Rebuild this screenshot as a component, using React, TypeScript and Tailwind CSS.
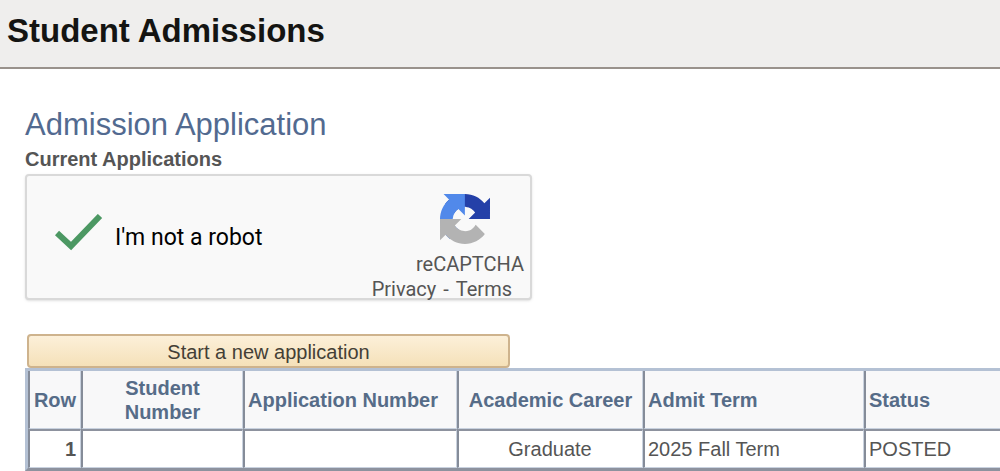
type Application = {
  studentNumber: string;
  applicationNumber: string;
  career: string;
  term: string;
  status: string;
};

const applications: Application[] = [
  {
    studentNumber: "",
    applicationNumber: "",
    career: "Graduate",
    term: "2025 Fall Term",
    status: "POSTED",
  },
];

const borderClass =
  "border-r border-b border-l-2 border-t-[#8d929e] border-r-[#c9d2df] border-b-[#c9d2df] border-l-[#858c99] last:border-r-0";
const headClass = `${borderClass} bg-[#f8f8f9] px-[3px] font-bold text-[#566c88]`;
const cellClass = `${borderClass} border-t-2 pr-1 pl-[3px]`;

function RecaptchaLogo() {
  return (
    <svg viewBox="0 0 64 64" className="size-[50px]" aria-hidden="true">
      <path
        fill="#2440a8"
        d="M64 31.955l-.033-1.37V4.687l-7.16 7.16C50.948 4.674 42.033.093 32.05.093c-10.389 0-19.622 4.96-25.458 12.64l11.736 11.86a15.55 15.55 0 0 1 4.754-5.334c2.05-1.6 4.952-2.906 8.968-2.906.485 0 .86.057 1.135.163 4.976.393 9.288 3.14 11.828 7.124l-8.307 8.307L64 31.953"
      />
      <path
        fill="#5189ea"
        d="M31.862.094l-1.37.033H4.594l7.16 7.16C4.58 13.147 0 22.06 0 32.046c0 10.388 4.96 19.622 12.64 25.458L24.5 45.768a15.55 15.55 0 0 1-5.334-4.754c-1.6-2.05-2.906-4.952-2.906-8.968 0-.485.057-.86.163-1.135.393-4.976 3.14-9.288 7.124-11.828l8.307 8.307L31.86.095"
      />
      <path
        fill="#b3b3b3"
        d="M.001 32.045l.033 1.37v25.898l7.16-7.16c5.86 7.173 14.774 11.754 24.76 11.754 10.388 0 19.622-4.96 25.458-12.64l-11.736-11.86a15.55 15.55 0 0 1-4.754 5.334c-2.05 1.6-4.952 2.906-8.968 2.906-.485 0-.86-.057-1.135-.163-4.976-.393-9.288-3.14-11.828-7.124l8.307-8.307c-10.522.04-22.4.066-27.295-.005"
      />
    </svg>
  );
}

function Recaptcha() {
  return (
    <div className="flex max-w-[507px] items-start justify-between rounded-sm border-2 border-[#d9d9d9] bg-[#f9f9f9] font-[Roboto,sans-serif] shadow-sm">
      <label className="relative flex items-center gap-3 self-center pt-0.5 pl-7 text-[23px] text-black">
        <input type="checkbox" defaultChecked className="peer sr-only" />
        <svg
          viewBox="0 0 48 48"
          className="invisible size-12 peer-checked:visible"
          aria-hidden="true"
        >
          <path d="M2 19L16 32L45 2" fill="none" stroke="#4c9863" strokeWidth="6" />
        </svg>
        I'm not a robot
      </label>
      <div className="flex flex-col items-end pt-[18px] pr-1.5 text-xl leading-[25px] text-[#555]">
        <div className="pr-[34px]">
          <RecaptchaLogo />
        </div>
        <div className="pt-2">reCAPTCHA</div>
        <div className="-mb-1 flex gap-[7px] pr-3">
          <a href="#privacy">Privacy</a>
          <span>-</span>
          <a href="#terms">Terms</a>
        </div>
      </div>
    </div>
  );
}

function ApplicationsTable() {
  return (
    <table className="w-full table-fixed border-separate border-spacing-0 border-t-3 border-b-3 border-l-3 border-t-[#b4c1d4] border-b-[#8d929e] border-l-[#b4c1d4] text-xl leading-6 text-[#555]">
      <colgroup>
        <col className="w-[53px]" />
        <col className="w-[162px]" />
        <col className="w-[214px]" />
        <col className="w-[186px]" />
        <col className="w-[221px]" />
        <col />
      </colgroup>
      <thead>
        <tr className="h-[58px]">
          <th scope="col" className={headClass}>Row</th>
          <th scope="col" className={headClass}>
            Student
            <br />
            Number
          </th>
          <th scope="col" className={`${headClass} text-left`}>Application Number</th>
          <th scope="col" className={headClass}>Academic Career</th>
          <th scope="col" className={`${headClass} text-left`}>Admit Term</th>
          <th scope="col" className={`${headClass} text-left`}>Status</th>
        </tr>
      </thead>
      <tbody>
        {applications.map((app, index) => (
          <tr key={index} className="h-[39px] bg-white">
            <th scope="row" className={`${cellClass} text-right`}>{index + 1}</th>
            <td className={cellClass}>{app.studentNumber}</td>
            <td className={cellClass}>{app.applicationNumber}</td>
            <td className={`${cellClass} text-center`}>{app.career}</td>
            <td className={cellClass}>{app.term}</td>
            <td className={cellClass}>{app.status}</td>
          </tr>
        ))}
      </tbody>
    </table>
  );
}

export default function App() {
  return (
    <div className="overflow-hidden bg-white font-['Liberation_Sans',Arial,sans-serif]">
      <header className="border-b-2 border-[#99928c] bg-[#efeeed] px-[7px] pt-[9px] pb-[14px]">
        <h1 className="text-[33px] leading-[44px] font-bold text-[#141412]">
          Student Admissions
        </h1>
      </header>
      <main className="pt-9 pl-[25px]">
        <h2 className="text-[31px] leading-10 text-[#526a90]">Admission Application</h2>
        <h3 className="pb-px text-xl leading-7 font-bold text-[#555]">
          Current Applications
        </h3>
        <Recaptcha />
        <button
          type="button"
          className="mt-[34px] ml-0.5 block h-[34px] w-full max-w-[483px] rounded-sm border-2 border-[#ceb38d] bg-linear-to-b from-[#fcf0d9] to-[#f5e1b9] pt-0.5 text-xl leading-6 text-[#443f36]"
        >
          Start a new application
        </button>
        <ApplicationsTable />
      </main>
    </div>
  );
}
